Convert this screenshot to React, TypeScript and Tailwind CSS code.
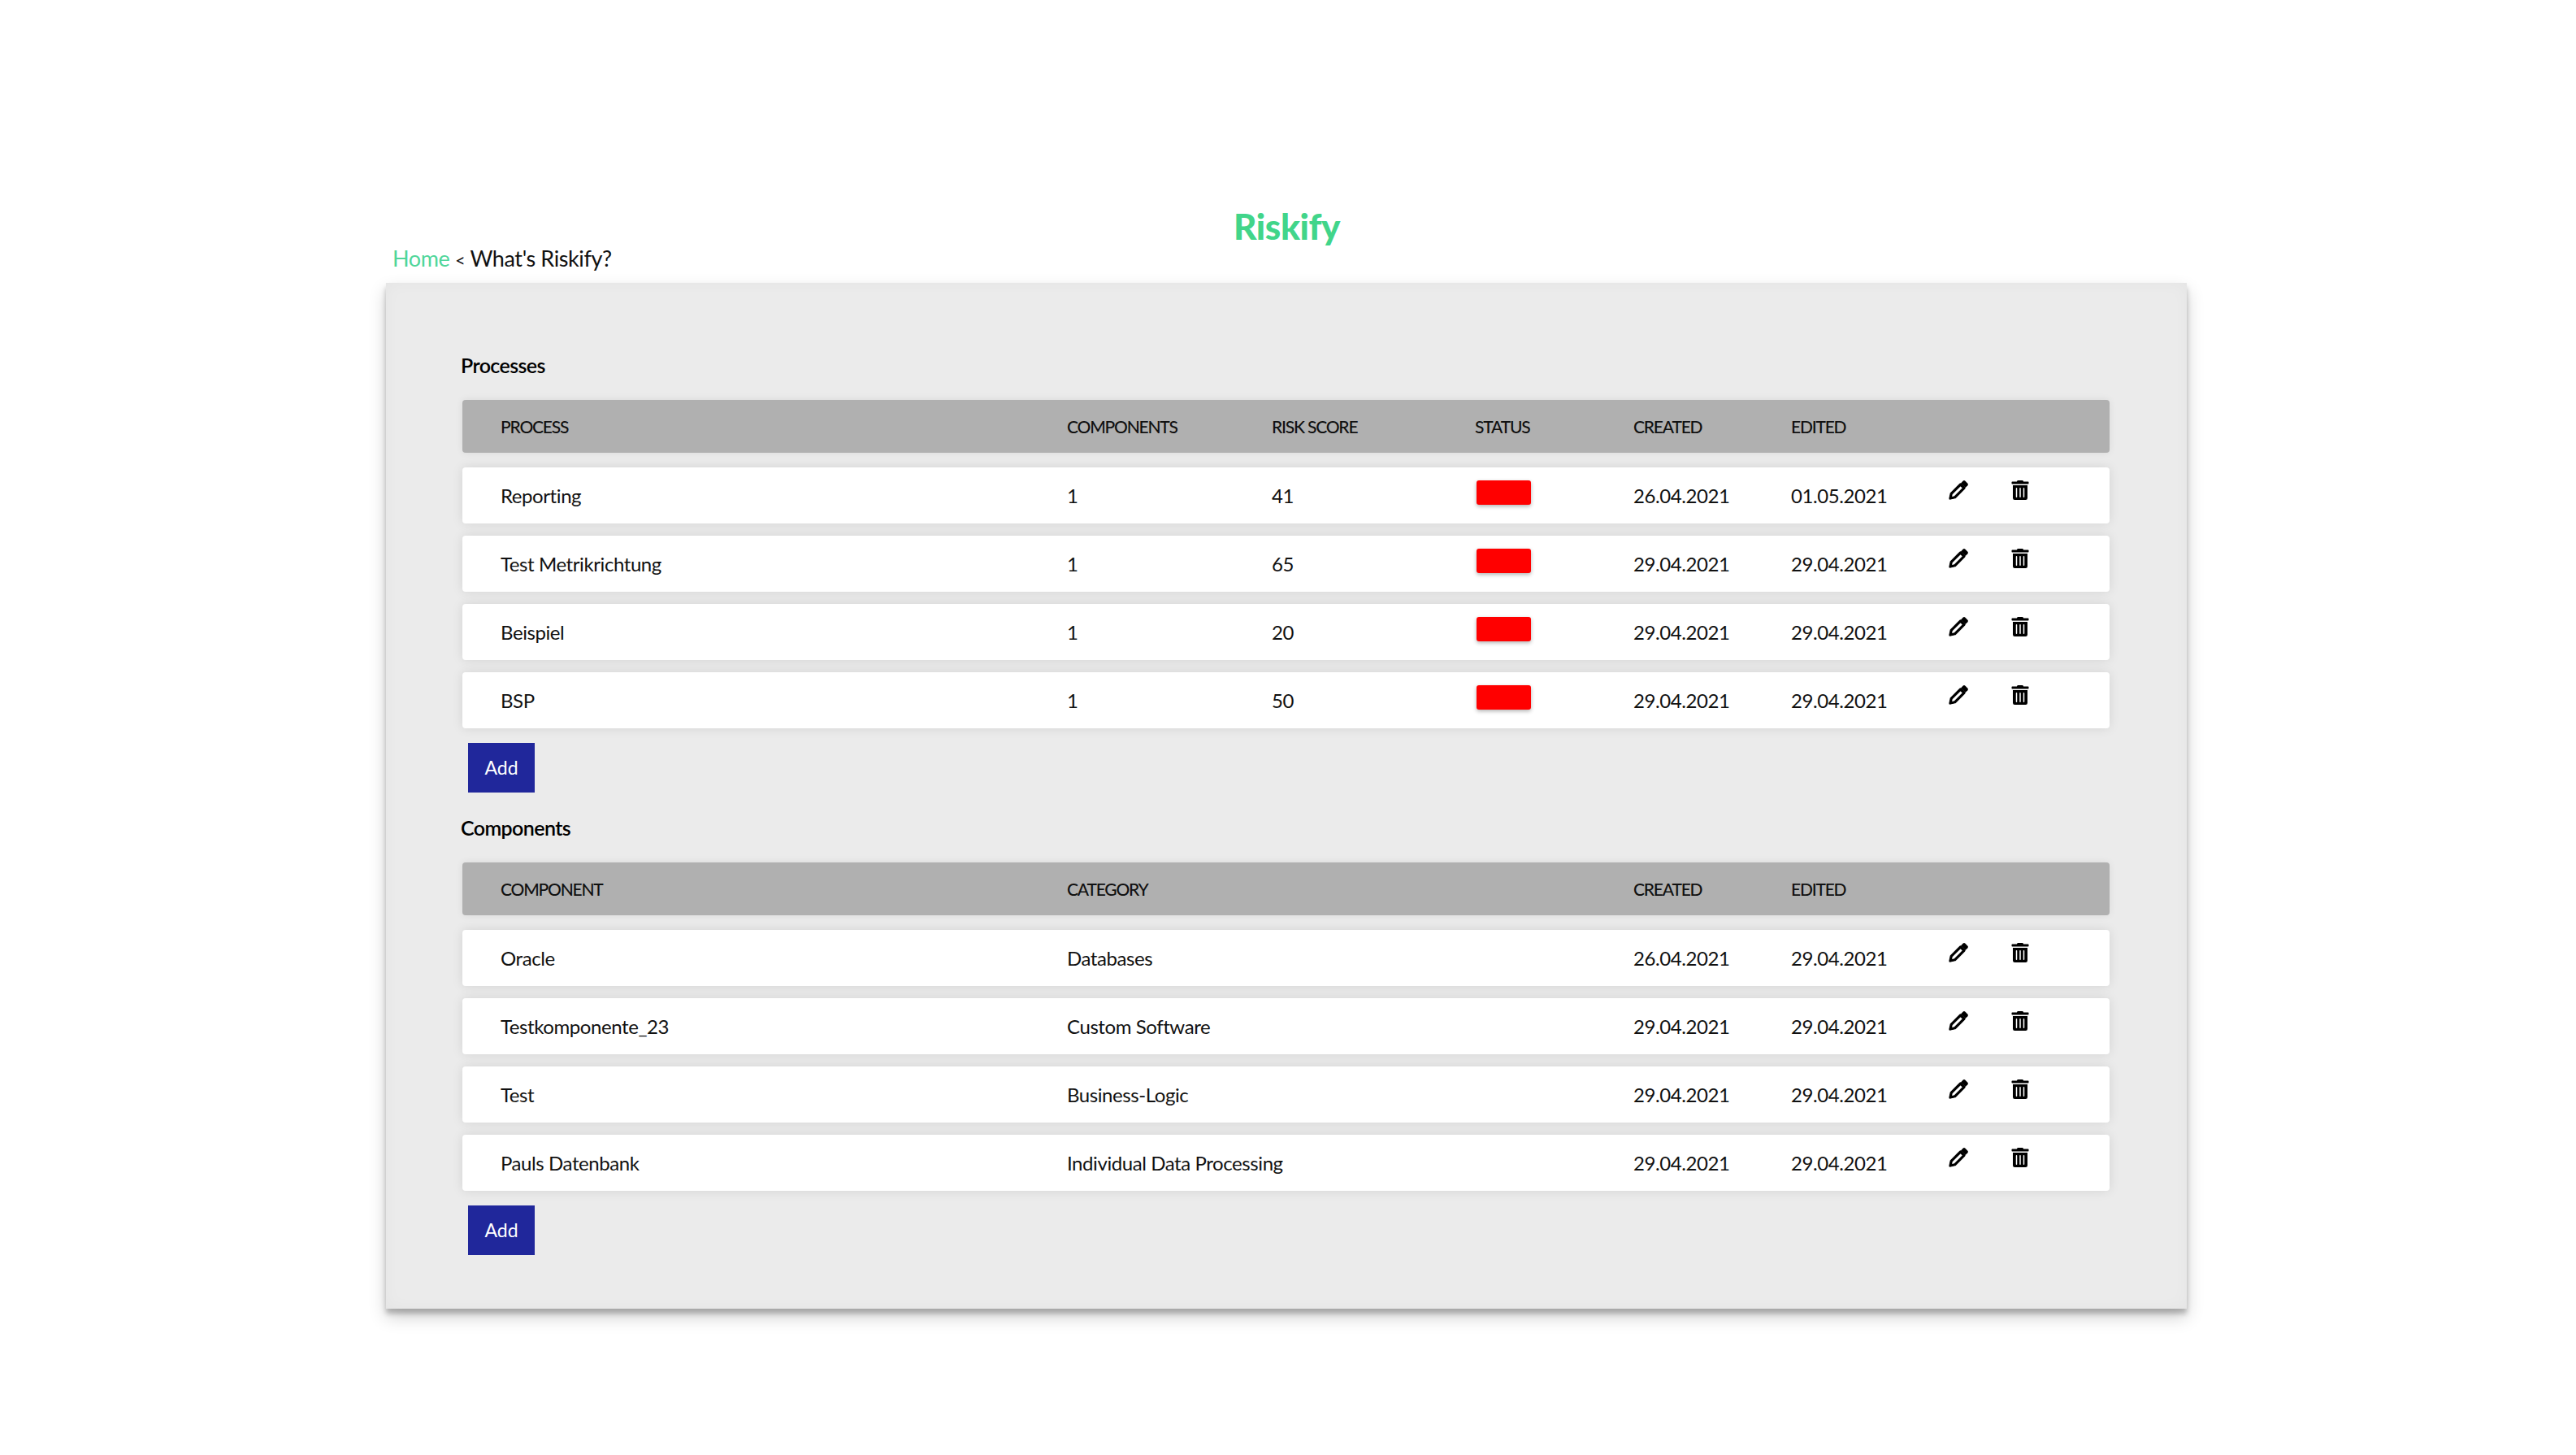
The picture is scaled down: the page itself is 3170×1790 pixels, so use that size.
import React from 'react';
import { FaTrashAlt } from 'react-icons/fa';

const processCols = 'grid-cols-[697px_252px_250px_195px_194px_194px_77px_1fr]';
const componentCols = 'grid-cols-[697px_697px_194px_194px_77px_1fr]';

const processes = [
  { name: 'Reporting', components: '1', score: '41', created: '26.04.2021', edited: '01.05.2021' },
  { name: 'Test Metrikrichtung', components: '1', score: '65', created: '29.04.2021', edited: '29.04.2021' },
  { name: 'Beispiel', components: '1', score: '20', created: '29.04.2021', edited: '29.04.2021' },
  { name: 'BSP', components: '1', score: '50', created: '29.04.2021', edited: '29.04.2021' },
];

const components = [
  { name: 'Oracle', category: 'Databases', created: '26.04.2021', edited: '29.04.2021' },
  { name: 'Testkomponente_23', category: 'Custom Software', created: '29.04.2021', edited: '29.04.2021' },
  { name: 'Test', category: 'Business-Logic', created: '29.04.2021', edited: '29.04.2021' },
  { name: 'Pauls Datenbank', category: 'Individual Data Processing', created: '29.04.2021', edited: '29.04.2021' },
];

const PencilIcon = () => (
  <svg width="24" height="24" viewBox="0 0 24 24" className="block">
    <path d="M14.6 5 L19 9.4 L7.6 20.8 L2 22 L3.2 16.4 Z" fill="#fff" stroke="#000" strokeWidth="3.2" strokeLinejoin="round" />
    <path d="M15 3.4 L17.8 0.6 Q19 -0.4 20.2 0.6 L23.4 3.8 Q24.4 5 23.4 6.2 L20.6 9 Z" fill="#000" />
    <path d="M0.6 23.4 L1.6 18 L6 22.4 Z" fill="#000" />
  </svg>
);

const Actions = () => (
  <>
    <div className="self-start mt-[16px]"><PencilIcon /></div>
    <div className="self-start mt-[16px]"><FaTrashAlt size={24} className="block w-[22px] h-[24px] text-black" /></div>
  </>
);

const Status = () => (
  <div className="self-start mt-[16px] ml-[2px] w-[67px] h-[30px] rounded-[3px] bg-[#ff0000] shadow-[0_2px_5px_rgba(0,0,0,0.3)]" />
);

const HeaderRow = ({ cols, labels }: { cols: string; labels: string[] }) => (
  <div className={`grid ${cols} items-center h-[65px] pl-[47px] rounded-[4px] bg-[#b0b0b0] text-[21px] tracking-[-1.2px] font-medium text-[#111] shadow-[0_0_10px_rgba(0,0,0,0.08)]`}>
    {labels.map((l) => <div key={l}>{l}</div>)}
  </div>
);

const Row = ({ cols, children }: { cols: string; children: React.ReactNode }) => (
  <div className={`grid ${cols} items-center h-[69px] pl-[47px] rounded-[4px] bg-white text-[24px] tracking-[-0.42px] text-[#111] shadow-[0_0_14px_rgba(0,0,0,0.1)]`}>
    {children}
  </div>
);

const AddButton = () => (
  <button className="block ml-[7px] mt-[18px] w-[82px] h-[61px] bg-[#20279b] text-white text-[23px]">Add</button>
);

export default function App() {
  return (
    <div className="min-h-[1790px] bg-white pt-[255px] font-['Lato','Liberation_Sans',sans-serif]">
      <div className="w-[3167px]">
        <h1 className="h-[46px] text-center text-[44px] leading-[46px] font-black tracking-[-0.4px] text-[#41d58a]">Riskify</h1>
      </div>
      <div className="w-[2216px] ml-[475px]">
        <div className="h-[47px] pl-[8px] text-[27px] leading-[34px] tracking-[-0.4px] text-[#111]">
          <a className="text-[#4fd69a]">Home</a> <span className="text-[22px]">&lt;</span> What's Riskify?
        </div>
        <div className="pt-[81px] pb-[66px] pl-[92px] pr-[95px] bg-[#ebebeb] shadow-[0_10px_20px_rgba(0,0,0,0.19),0_6px_6px_rgba(0,0,0,0.23),inset_0_0_20px_rgba(0,0,0,0.03)]">
          <h2 className="h-[40px] text-[25px] leading-[40px] tracking-[-0.6px] font-semibold text-black">Processes</h2>
          <div className="ml-[2px] mt-[23px]">
            <HeaderRow cols={processCols} labels={['PROCESS', 'COMPONENTS', 'RISK SCORE', 'STATUS', 'CREATED', 'EDITED']} />
            <div className="mt-[18px] flex flex-col gap-[15px]">
              {processes.map((p) => (
                <Row key={p.name} cols={processCols}>
                  <div>{p.name}</div>
                  <div>{p.components}</div>
                  <div>{p.score}</div>
                  <Status />
                  <div>{p.created}</div>
                  <div>{p.edited}</div>
                  <Actions />
                </Row>
              ))}
            </div>
            <AddButton />
          </div>
          <h2 className="mt-[23px] h-[40px] text-[25px] leading-[40px] tracking-[-0.6px] font-semibold text-black">Components</h2>
          <div className="ml-[2px] mt-[23px]">
            <HeaderRow cols={componentCols} labels={['COMPONENT', 'CATEGORY', 'CREATED', 'EDITED']} />
            <div className="mt-[18px] flex flex-col gap-[15px]">
              {components.map((c) => (
                <Row key={c.name} cols={componentCols}>
                  <div>{c.name}</div>
                  <div>{c.category}</div>
                  <div>{c.created}</div>
                  <div>{c.edited}</div>
                  <Actions />
                </Row>
              ))}
            </div>
            <AddButton />
          </div>
        </div>
      </div>
    </div>
  );
}
